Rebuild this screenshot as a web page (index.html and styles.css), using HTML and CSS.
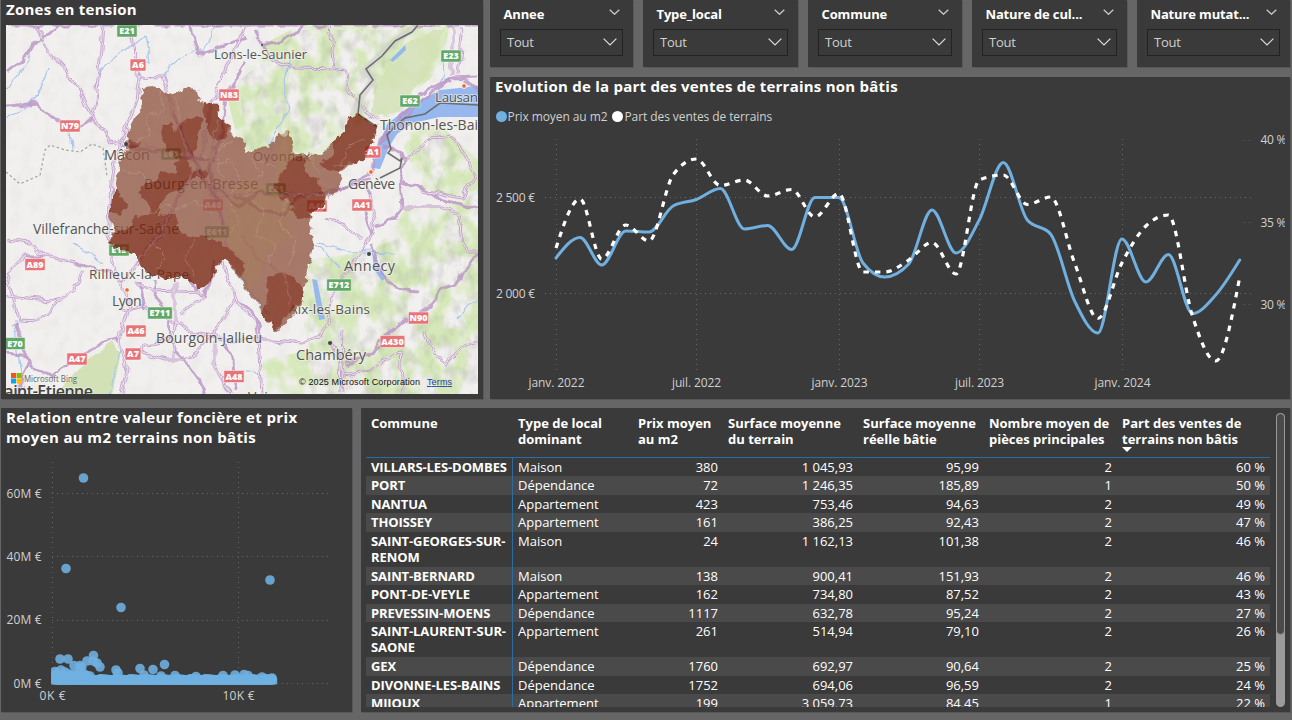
FILE: index.html
```html
<!DOCTYPE html>
<html lang="fr">
<head>
<meta charset="utf-8">
<title>Zones en tension</title>
<link rel="stylesheet" href="styles.css">
</head>
<body>
<main class="report">
  <section class="panel map-panel">
    <h2 class="title">Zones en tension</h2>
    <svg class="map" viewBox="6 25 472 369" width="472" height="369">
      <defs>
        <filter id="rough" x="-5%" y="-5%" width="110%" height="110%">
          <feTurbulence type="fractalNoise" baseFrequency="0.13" numOctaves="2" seed="4" result="n"/>
          <feDisplacementMap in="SourceGraphic" in2="n" scale="9" xChannelSelector="R" yChannelSelector="G"/>
        </filter>
        <filter id="wobble" x="-5%" y="-5%" width="110%" height="110%">
          <feTurbulence type="fractalNoise" baseFrequency="0.07" numOctaves="2" seed="9" result="n"/>
          <feDisplacementMap in="SourceGraphic" in2="n" scale="10" xChannelSelector="R" yChannelSelector="G"/>
        </filter>
        <filter id="forest" x="0" y="0" width="100%" height="100%" color-interpolation-filters="sRGB">
          <feTurbulence type="fractalNoise" baseFrequency="0.045 0.035" numOctaves="3" seed="12"/>
          <feColorMatrix values="0 0 0 0 .84  0 0 0 0 .91  0 0 0 0 .73  0 4.500 0 0 -1.700"/>
          <feComposite in2="SourceGraphic" operator="in"/>
        </filter>
        <filter id="relief" x="0" y="0" width="100%" height="100%" color-interpolation-filters="sRGB">
          <feTurbulence type="fractalNoise" baseFrequency="0.09 0.06" numOctaves="3" seed="3"/>
          <feColorMatrix values="0 0 0 0 .5  0 0 0 0 .5  0 0 0 0 .5  0 3 0 0 -1.3"/>
          <feComposite in2="SourceGraphic" operator="in"/>
        </filter>
        <clipPath id="frame"><rect x="6" y="25" width="472" height="369"/></clipPath>
      </defs>
      <rect x="6" y="25" width="472" height="369" fill="#f1f0ee"/>
      <rect x="6" y="25" width="472" height="369" opacity=".04" filter="url(#relief)"/>
      <g filter="url(#forest)">
        <path d="M228 100L262 45L300 25H450L440 70L400 105L360 125L322 155L240 150ZM322 394L300 310L310 260L375 250L405 210L478 200V394ZM400 135L440 125L478 160V205L420 190ZM265 394L262 360L310 350L340 394Z" fill="#000"/>
      </g>
      <path d="M375 85L410 40L445 28L430 70L400 112L370 118Z" fill="#d3e2b6" opacity=".8" filter="url(#wobble)"/>
      <path d="M56 394L82 365L112 342L122 355L112 394Z" fill="#d3e2b6" filter="url(#wobble)"/>
      <g filter="url(#relief)" opacity=".16">
        <path d="M310 270L395 240L478 190V394H305ZM240 80L300 30H410L360 120L300 155H245ZM405 140L440 130L470 170L440 195Z"/>
      </g>
      <!-- lakes and rivers -->
      <g fill="#96b8ef">
        <path d="M373 168L376 152L387 124L413 104L440 90L478 86V117L440 117L413 123L397 134L389 147L380 169Z"/>
        <path d="M312 279L317 280L325 319L319 320Z"/>
        <path d="M372 251L378 263L386 278L382 281L374 269Z"/>
        <path d="M390 60L405 45L406 50L393 62Z"/>
      </g>
      <g fill="none" stroke="#a9c7ee" stroke-width="1.2" filter="url(#wobble)">
        <path d="M290 58L284 80L288 110L270 145M95 75L120 55L145 35M145 35L150 62L137 58M162 74L185 55L205 50L215 25M50 68L36 98L6 120M6 90L30 55M70 132L72 148M72 245L103 262M318 244L345 252L375 251M395 254L360 253M313 246L322 250L340 268M110 394L115 370L123 350M14 318L18 360L24 394M235 270L270 315M478 300L455 320M443 48L445 75L440 83M238 370L262 375"/>
      </g>
      <!-- roads: lilac casing with a paler core -->
      <g fill="none" stroke-linejoin="round" filter="url(#wobble)">
        <g stroke="#b992c4" stroke-opacity=".8" stroke-width="2.9">
          <path d="M132 25L134 60L140 78L137 100L126 130L118 146L112 180L110 225L108 246L118 275L130 305L124 325L120 340L128 370L122 394"/>
          <path d="M60 25L48 36L35 41L28 54L6 72M38 25L45 45L60 65L80 90L92 115M103 25L99 70L96 100L92 118L116 145M6 106L36 103L55 120L78 126L92 118M140 75L162 76L175 112L190 152L205 180L216 198L225 225"/>
          <path d="M247 25L238 45L222 78L213 100L205 140L195 170L178 198L160 235L138 262L122 285M216 25L225 22M190 25L198 55L225 46L247 38M246 60L225 95L222 130L212 165"/>
          <path d="M118 146L150 151L185 157L210 162L212 187L240 205L262 192L300 195L340 190L370 175L376 160L380 140L400 115L425 92L450 78L478 77M300 195L285 215L262 210L235 195"/>
          <path d="M6 240L30 243L45 256L75 262L98 270L118 275M83 270L72 290L60 300L40 322L18 321M18 321L14 300L6 272L25 256L45 256M6 296L50 300L63 296"/>
          <path d="M6 353L22 355L35 368L53 378L62 367L85 352L108 340L120 338M15 395L28 360L14 322"/>
          <path d="M122 310L145 305L160 315L195 332L225 340L275 340L303 343L322 332L328 320L332 296L345 275L360 255L370 235L376 220L370 195L362 182"/>
          <path d="M135 282L155 292L200 290L205 298L180 315M154 280L155 292L165 318L175 350L185 360L165 360L143 353L145 345L175 340M185 360L200 380L205 394M140 282L145 310M175 283L175 315L174 358M235 300L222 322L200 350L185 360M215 262L205 298L188 278M223 262L238 305L255 320L258 340L262 394M235 300L258 320L262 340"/>
          <path d="M215 340L215 365L225 385L232 394M225 345L233 355L234 390"/>
          <path d="M330 340L342 362L345 394M345 362L370 355L385 335L405 320L420 315L440 290L455 285L478 252M345 375L370 370L400 350L403 394M346 366L388 345M425 330L432 350L446 365L460 350L478 342M420 292L395 290L380 270L372 245"/>
          <path d="M376 227L395 217L402 208L400 180L405 160L397 150L384 147M402 208L440 208L460 215L462 235L468 252L478 252M402 182L420 187L440 200L460 205L478 210M405 160L425 140L440 135L455 140L475 175L462 198L420 190"/>
          <path d="M452 25L452 75M463 28L458 75M478 90L465 80M380 145L395 125L435 90L450 80M376 120L360 106L350 90L345 70L335 68L330 25M335 69L295 68L270 60L262 45L256 30M262 45L290 38L305 25M6 25L480 25"/>
          <path d="M325 220L345 225L362 240M370 235L365 210M328 198L345 187L370 180M340 394L342 330"/>
        </g>
        <g stroke="#eee0f1" stroke-width="1.1">
          <path d="M132 25L134 60L140 78L137 100L126 130L118 146L112 180L110 225L108 246L118 275L130 305L124 325L120 340L128 370L122 394M247 25L238 45L222 78L213 100L205 140L195 170L178 198L160 235L138 262L122 285M38 25L45 45L60 65L80 90L92 115M103 25L99 70L96 100L92 118L116 145M6 296L50 300L63 296M122 310L145 305L160 315L195 332L225 340L275 340L303 343L322 332L328 320L332 296L345 275L360 255L370 235L376 220L370 195M402 208L440 208L460 215L462 235L468 252L478 252M452 25L452 75M463 28L458 75M330 340L342 362L345 394M405 160L425 140L440 135L455 140L475 175L462 198L420 190M335 69L295 68L270 60M235 300L222 322L200 350L185 360M376 120L360 106L350 90L345 70L335 68L330 25M345 375L370 370L400 350L403 394M425 330L432 350L446 365L460 350L478 342M140 75L162 76L175 112M6 240L30 243L45 256L75 262M83 270L72 290L60 300L40 322L18 321L14 300L6 272L25 256M175 283L175 315L174 358M135 282L155 292L200 290L205 298L180 315M185 360L165 360L143 353L145 345L175 340M258 340L262 394M223 262L238 305L255 320M215 340L215 365L225 385L232 394M325 220L345 225L362 240M340 394L342 330"/>
        </g>
      </g>
      <!-- national border -->
      <path d="M418 25L395 41L366 69L373 80L358 102L358 114" fill="none" stroke="#cfcfcf" stroke-width="7" opacity=".6"/>
      <path d="M418 25L412 32L395 41L382 56L366 69L373 80L360 95L358 114L377 127M478 105L440 103L425 114L405 118L395 126L387 135L391 149L388 153L400 161L402 158L400 168L380 178" fill="none" stroke="#6d6d6d" stroke-width="1.6"/>
      <path d="M6 172L20 184L40 175L45 150L50 145L65 150L80 152L92 144L103 148L107 176" fill="none" stroke="#999" stroke-width="1.1" stroke-dasharray="2.500 2.500"/>
      <!-- city labels -->
      <g class="city" clip-path="url(#frame)">
        <text x="214" y="59" font-size="13" textLength="93">Lons-le-Saunier</text>
        <text x="435" y="102" font-size="13.500" textLength="43">Lausan</text>
        <text x="380" y="130" font-size="14" textLength="98">Thonon-les-Bai</text>
        <text x="104" y="160" font-size="14.500" textLength="46">Mâcon</text>
        <text x="253" y="161" font-size="13" textLength="57">Oyonnax</text>
        <text x="144" y="188.500" font-size="14" textLength="114">Bourg-en-Bresse</text>
        <text x="348" y="188.500" font-size="14" textLength="47">Genève</text>
        <text x="33" y="233.500" font-size="14" textLength="146">Villefranche-sur-Saône</text>
        <text x="89" y="279" font-size="13.500" textLength="100">Rillieux-la-Pape</text>
        <text x="112" y="305.500" font-size="14" textLength="29.500">Lyon</text>
        <text x="344" y="271" font-size="14.500" textLength="51">Annecy</text>
        <text x="289" y="314" font-size="13.500" textLength="81">Aix-les-Bains</text>
        <text x="156" y="343" font-size="14" textLength="106">Bourgoin-Jallieu</text>
        <text x="296" y="360" font-size="14.500" textLength="70">Chambéry</text>
        <text x="248" y="402" font-size="14" textLength="42">Voiron</text>
      </g>
      <text class="city strong" x="-4" y="396.500" font-size="16" textLength="97">Saint-Etienne</text>
      <g id="shields"></g>
      <!-- communes of the department -->
      <g opacity=".78" filter="url(#rough)">
        <path fill="#925844" d="M143 88L152 87L160 89L167 95L177 92L190 87L197 90L200 102L208 106L217 107L218 117L228 125L233 135L246 141L245 153L265 147L275 143L276 132L283 136L290 132L293 143L292 154L322 155L332 142L345 130L348 120L358 114L377 127L373 143L365 152L368 159L353 163L339 172L343 180L337 192L327 195L323 208L310 212L312 233L313 250L307 270L305 288L302 303L295 312L287 323L275 332L270 323L262 313L260 307L247 290L238 277L227 260L222 260L215 270L212 282L200 288L187 278L167 278L150 275L143 268L137 257L128 252L108 243L115 232L110 220L112 200L118 190L117 182L120 163L127 148L128 133L137 115L142 100Z"/>
        <path fill="#8f5f30" opacity=".5" d="M276 132L290 132L293 154L322 156L303 172L310 180L300 214L285 216L292 235L268 250L262 272L250 290L230 255L226 220L232 190L250 180L276 190Z"/>
        <g fill="#77200a">
          <path d="M203 104L217 106L218 117L228 126L226 137L217 142L208 130L205 118Z"/>
          <path d="M162 126L170 124L175 132L183 122L196 117L203 117L199 130L197 145L192 155L188 160L193 172L203 168L210 171L206 178L190 178L183 187L172 192L166 198L155 208L145 200L138 192L145 182L156 180L160 172L175 175L178 158L166 150L163 138Z"/>
          <path d="M128 140L140 142L139 148L130 148Z"/>
          <path d="M112 195L119 190L124 200L127 208L121 214L111 212Z"/>
          <path d="M108 243L118 231L130 227L136 216L150 215L152 198L160 204L159 215L175 213L180 232L195 237L210 238L222 242L222 247L235 253L246 265L241 277L227 260L222 260L215 270L212 282L200 288L187 278L167 278L150 275L143 268L137 257L128 252Z"/>
          <path d="M332 142L345 130L348 120L358 114L377 127L373 143L365 152L368 159L353 163L332 166Z"/>
          <path d="M293 157L306 157L303 172L317 180L325 197L323 208L310 213L309 218L295 219L292 205L280 197L275 185L282 175Z"/>
          <path d="M320 163L332 155L334 166L345 165L338 172L326 170Z"/>
          <path d="M267 277L282 272L295 278L305 290L302 303L290 312L275 332L262 313L268 300Z"/>
        </g>
        <path fill="none" stroke="#b98976" stroke-width=".7" opacity=".7" d="M160 90L163 110L145 118L150 135L135 140M175 95L180 118M200 150L215 165L230 160L240 180L228 200L240 220L225 240M150 215L165 205L180 210L195 200L212 215M250 155L262 175L245 195L265 210L255 235L275 245L268 265M285 200L280 225L295 240L290 265M120 170L140 172L150 185M310 155L320 175M195 240L185 260L195 275M150 240L165 255L158 270M225 180L212 150L235 140M275 165L258 160M340 165L350 145L365 140"/>
        <path fill="none" stroke="#8c4943" stroke-width="1.800" opacity=".7" d="M167 95L185 145L200 175L216 198L228 250M128 140L165 151L208 160L216 198L262 192L300 195L328 195M208 160L218 120M195 170L178 198L160 235L138 262M240 235L260 260L285 275L290 305"/>
      </g>
      <g fill="#444"><circle cx="126" cy="144" r="2"/><circle cx="369" cy="254" r="2"/><circle cx="330" cy="343" r="2"/><circle cx="262" cy="45" r="1"/><circle cx="200" cy="171" r="2" opacity=".5"/></g>
      <g fill="#f2672d" stroke="#fff" stroke-width="1"><circle cx="127" cy="290" r="2.400"/><circle cx="371" cy="172" r="2.400"/><circle cx="464" cy="86" r="2.400"/></g>
      <g><path fill="#f35325" d="M11 373h5v5h-5z"/><path fill="#81bc06" d="M16.500 373h5v5h-5z"/><path fill="#05a6f0" d="M11 378.500h5v5h-5z"/><path fill="#ffba08" d="M16.500 378.500h5v5h-5z"/></g>
      <text class="bing" x="24" y="382" textLength="53" lengthAdjust="spacingAndGlyphs">Microsoft Bing</text>
      <text class="legal" x="299" y="385" textLength="121">© 2025 Microsoft Corporation</text>
      <text class="legal terms" x="427" y="385" textLength="25">Terms</text>
    </svg>
  </section>

  <div class="right-top">
    <div class="slicers">
      <section class="panel slicer"><header><b>Annee</b><svg class="chev sm" viewBox="0 0 11 6"><path d="M.7.7l4.800 4.600L10.300.7"/></svg></header><div class="drop">Tout<svg class="chev" viewBox="0 0 14 8"><path d="M.6.6L7 7L13.400.6"/></svg></div></section>
      <section class="panel slicer"><header><b>Type_local</b><svg class="chev sm" viewBox="0 0 11 6"><path d="M.7.7l4.800 4.600L10.300.7"/></svg></header><div class="drop">Tout<svg class="chev" viewBox="0 0 14 8"><path d="M.6.6L7 7L13.400.6"/></svg></div></section>
      <section class="panel slicer"><header><b>Commune</b><svg class="chev sm" viewBox="0 0 11 6"><path d="M.7.7l4.800 4.600L10.300.7"/></svg></header><div class="drop">Tout<svg class="chev" viewBox="0 0 14 8"><path d="M.6.6L7 7L13.400.6"/></svg></div></section>
      <section class="panel slicer"><header><b>Nature de cul...</b><svg class="chev sm" viewBox="0 0 11 6"><path d="M.7.7l4.800 4.600L10.300.7"/></svg></header><div class="drop">Tout<svg class="chev" viewBox="0 0 14 8"><path d="M.6.6L7 7L13.400.6"/></svg></div></section>
      <section class="panel slicer"><header><b>Nature mutat...</b><svg class="chev sm" viewBox="0 0 11 6"><path d="M.7.7l4.800 4.600L10.300.7"/></svg></header><div class="drop">Tout<svg class="chev" viewBox="0 0 14 8"><path d="M.6.6L7 7L13.400.6"/></svg></div></section>
    </div>
    <section class="panel line-panel">
      <h2 class="title">Evolution de la part des ventes de terrains non bâtis</h2>
      <div class="legend"><i class="dot blue"></i><span>Prix moyen au m2</span><i class="dot white"></i><span>Part des ventes de terrains</span></div>
      <svg class="chart" viewBox="490 130 795 268" width="795" height="268">
        <g class="grid">
          <path d="M545 197.500H1251M545 293.500H1251M556.500 139V372M696.500 139V372M839.500 139V372M979.500 139V372M1122.500 139V372M1244 140.500H1251M1244 222.500H1251M1244 304.500H1251"/>
        </g>
        <path id="price" class="price"/>
        <path id="share" class="share"/>
        <g class="axis">
          <text x="496" y="202" textLength="39">2 500 €</text><text x="496" y="298" textLength="39">2 000 €</text>
          <text x="1260.500" y="144" textLength="26">40 %</text><text x="1260.500" y="226.500" textLength="26">35 %</text><text x="1260.500" y="308.500" textLength="26">30 %</text>
          <text x="528.500" y="387" textLength="56">janv. 2022</text><text x="672" y="387" textLength="49">juil. 2022</text><text x="811.500" y="387" textLength="56">janv. 2023</text><text x="955" y="387" textLength="49">juil. 2023</text><text x="1094.500" y="387" textLength="56">janv. 2024</text>
        </g>
      </svg>
    </section>
  </div>

  <div class="bottom">
    <section class="panel scatter-panel">
      <h2 class="title">Relation entre valeur foncière et prix<br>moyen au m2 terrains non bâtis</h2>
      <svg class="scatter" viewBox="1 450 350 262" width="350" height="262">
        <g class="grid"><path d="M52 493.500H330M52 556.500H330M52 620.500H330M52 683.500H330M52.500 462V684M238.500 462V684"/></g>
        <clipPath id="plot"><rect x="51" y="455" width="290" height="229.600"/></clipPath>
        <g id="dots" clip-path="url(#plot)"></g>
        <g class="axis">
          <text x="6.500" y="498" textLength="35">60M €</text><text x="6.500" y="561" textLength="35">40M €</text><text x="6.500" y="624" textLength="35">20M €</text><text x="13.500" y="688" textLength="28">0M €</text>
          <text x="39.500" y="700" textLength="26">0K €</text><text x="222.500" y="700" textLength="32">10K €</text>
        </g>
      </svg>
    </section>
    <section class="panel table-panel">
      <div class="viewport">
        <div class="row head"><span>Commune</span><span>Type de local<br>dominant</span><span>Prix moyen<br>au m2</span><span>Surface moyenne<br>du terrain</span><span>Surface moyenne<br>réelle bâtie</span><span>Nombre moyen de<br>pièces principales</span><span>Part des ventes de<br>terrains non bâtis<svg class="sort" viewBox="0 0 10 5"><path d="M0 0H10L5 5Z"/></svg></span></div>
        <div class="row"><b>VILLARS-LES-DOMBES</b><span>Maison</span><span>380</span><span>1 045,93</span><span>95,99</span><span>2</span><span>60 %</span></div>
        <div class="row"><b>PORT</b><span>Dépendance</span><span>72</span><span>1 246,35</span><span>185,89</span><span>1</span><span>50 %</span></div>
        <div class="row"><b>NANTUA</b><span>Appartement</span><span>423</span><span>753,46</span><span>94,63</span><span>2</span><span>49 %</span></div>
        <div class="row"><b>THOISSEY</b><span>Appartement</span><span>161</span><span>386,25</span><span>92,43</span><span>2</span><span>47 %</span></div>
        <div class="row tall"><b>SAINT-GEORGES-SUR-<br>RENOM</b><span>Maison</span><span>24</span><span>1 162,13</span><span>101,38</span><span>2</span><span>46 %</span></div>
        <div class="row"><b>SAINT-BERNARD</b><span>Maison</span><span>138</span><span>900,41</span><span>151,93</span><span>2</span><span>46 %</span></div>
        <div class="row"><b>PONT-DE-VEYLE</b><span>Appartement</span><span>162</span><span>734,80</span><span>87,52</span><span>2</span><span>43 %</span></div>
        <div class="row"><b>PREVESSIN-MOENS</b><span>Dépendance</span><span>1117</span><span>632,78</span><span>95,24</span><span>2</span><span>27 %</span></div>
        <div class="row tall"><b>SAINT-LAURENT-SUR-<br>SAONE</b><span>Appartement</span><span>261</span><span>514,94</span><span>79,10</span><span>2</span><span>26 %</span></div>
        <div class="row"><b>GEX</b><span>Dépendance</span><span>1760</span><span>692,97</span><span>90,64</span><span>2</span><span>25 %</span></div>
        <div class="row"><b>DIVONNE-LES-BAINS</b><span>Dépendance</span><span>1752</span><span>694,06</span><span>96,59</span><span>2</span><span>24 %</span></div>
        <div class="row"><b>MIJOUX</b><span>Appartement</span><span>199</span><span>3 059,73</span><span>84,45</span><span>1</span><span>22 %</span></div>
      </div>
      <div class="scroll"><div class="thumb"></div></div>
    </section>
  </div>
</main>
<script src="script.js"></script>
</body>
</html>
```

FILE: styles.css
```css
* { box-sizing: border-box; }
body { margin: 0; background: #666; font-family: "Open Sans", "Noto Sans", sans-serif; color: #fff; }
.report { width: 1292px; height: 720px; overflow: hidden; display: grid; grid-template-columns: 482px 800px; grid-template-rows: 399px 304px; column-gap: 7px; row-gap: 9px; padding-left: 1px; }
.panel { background: #3a3a3a; box-shadow: 1px 1px 0 #585858; overflow: hidden; }
.title { margin: 0; font-size: 15px; line-height: 18px; font-weight: 700; letter-spacing: .24px; padding-left: 5px; white-space: nowrap; }
.map-panel .title { height: 25px; }
.map { display: block; margin-left: 5px; }
.city text, text.city { fill: #555; stroke: #f4f3ef; stroke-opacity: .6; stroke-width: 2px; paint-order: stroke; }
text.strong { fill: #444; font-weight: 600; }
.shield text { fill: #fff; font-size: 9px; font-weight: 800; text-anchor: middle; }
.bing { font-size: 9px; fill: #666; }
.legal { font-family: "Liberation Sans", sans-serif; font-size: 9px; fill: #111; }
.terms { fill: #1a3fa8; text-decoration: underline; }

.right-top { display: flex; flex-direction: column; gap: 10px; }
.slicers { display: grid; grid-template-columns: 143px 155px 154px 155px 153px; gap: 10px; height: 67px; }
.slicer { padding: 0 10px; }
.slicer header { height: 28.5px; padding: 4px 3.5px 0; display: flex; justify-content: space-between; font-size: 13px; line-height: 20px; letter-spacing: -.15px; white-space: nowrap; }
.chev { width: 14px; height: 8px; fill: none; stroke: #ddd; stroke-width: 1.2; }
.chev.sm { width: 11px; height: 6px; margin-top: 4.5px; stroke: #ccc; }
.drop { height: 27px; border: 1px solid #222; padding: 0 5px 1px 6px; display: flex; align-items: center; justify-content: space-between; color: #d0d0d0; font-size: 13px; letter-spacing: -.2px; }
.line-panel { height: 322px; }
.line-panel .title { padding-left: 5px; height: 31px; }
.legend { height: 17px; padding: 0 0 1px 5.5px; display: flex; align-items: center; font-size: 12px; letter-spacing: -.08px; color: #d0d0d0; white-space: nowrap; }
.dot { width: 11px; height: 11px; border-radius: 50%; margin-right: 1px; flex: none; }
.dot.blue { background: #70b0e0; }
.dot.white { background: #fff; margin-left: 5px; }
.chart { display: block; margin-top: 5px; }
.grid path { fill: none; stroke: #646464; stroke-width: 1; stroke-dasharray: 1 4; }
.axis text { font-size: 12px; fill: #d0d0d0; }
.price { fill: none; stroke: #70b0e0; stroke-width: 3; stroke-linecap: round; }
.share { fill: none; stroke: #fff; stroke-width: 3.2; stroke-dasharray: 5.5 6; }

.bottom { grid-column: 1 / 3; display: grid; grid-template-columns: 350.5px 929px; column-gap: 9.5px; }
.scatter-panel .title { height: 42px; line-height: 20px; position: relative; top: -1px; letter-spacing: .37px; }
.scatter { display: block; }
#dots { fill: #70b0e0; fill-opacity: .88; }

.table-panel { display: flex; padding-left: 5px; }
.viewport { width: 904px; height: 299px; overflow: hidden; }
.row { display: grid; grid-template-columns: 147px 120px 90px 135px 126px 133px 153px; height: 18.5px; font-size: 13px; line-height: 16px; letter-spacing: 0; }
.row b { letter-spacing: -.1px; }
.row.tall { height: 35px; }
.row > * { padding: 1px 5px 0; text-align: right; white-space: nowrap; }
.row > :nth-child(-n+2) { text-align: left; }
.row > :first-child { border-right: 1px solid #2b6ca3; }
.row:nth-child(odd):not(.head) { background: #4a4a4a; }
.head { height: 49.5px; font-weight: 700; border-bottom: 1px solid #2b6ca3; }
.row.head { height: 49.5px; }
.row.head > * { text-align: left; padding-top: 6.5px; border: 0; letter-spacing: 0; }
.sort { display: block; width: 10px; height: 5px; fill: #fff; }
.scroll { width: 9px; height: 294px; margin: 5px 0 0 6px; background: #9b9b9b; border-radius: 5px; }
.thumb { height: 222px; background: #4a4a4a; border: 1px solid #999; border-radius: 5px; }
```

FILE: script.js
```js
const NS = 'http://www.w3.org/2000/svg';
const make = (tag, attrs, parent) => {
  const el = document.createElementNS(NS, tag);
  for (const k in attrs) el.setAttribute(k, attrs[k]);
  parent.appendChild(el);
  return el;
};

// Monotone cubic interpolation through monthly points.
function monotone(xs, ys) {
  const n = xs.length, s = [], m = [];
  for (let i = 0; i < n - 1; i++) s.push((ys[i + 1] - ys[i]) / (xs[i + 1] - xs[i]));
  for (let i = 1; i < n - 1; i++) {
    const h0 = xs[i] - xs[i - 1], h1 = xs[i + 1] - xs[i];
    const p = (s[i - 1] * h1 + s[i] * h0) / (h0 + h1);
    m[i] = (Math.sign(s[i - 1]) + Math.sign(s[i])) * Math.min(Math.abs(s[i - 1]), Math.abs(s[i]), Math.abs(p) / 2) || 0;
  }
  m[0] = (3 * s[0] - m[1]) / 2;
  m[n - 1] = (3 * s[n - 2] - m[n - 2]) / 2;
  let d = `M${xs[0]} ${ys[0]}`;
  for (let i = 0; i < n - 1; i++) {
    const h = (xs[i + 1] - xs[i]) / 3;
    d += `C${xs[i] + h} ${ys[i] + h * m[i]} ${xs[i + 1] - h} ${ys[i + 1] - h * m[i + 1]} ${xs[i + 1]} ${ys[i + 1]}`;
  }
  return d;
}
const start = Date.UTC(2022, 0, 1);
const months = Array.from({ length: 30 }, (_, i) => 556 + (Date.UTC(2022, i, 1) - start) / 864e5 * 0.7752);
const price = [258, 237.5, 265, 231, 232, 206, 199.5, 188.5, 229, 225.5, 249.5, 197.5, 197.5, 263, 277, 264, 210, 253, 220, 162.5, 220, 234, 301, 333, 239, 282, 254.5, 313.5, 295, 260];
const share = [248, 199, 259, 225, 241, 175, 159, 185.5, 180, 196, 189.5, 217, 193.5, 272, 272, 260, 242.5, 274, 180, 175, 204.5, 197, 263, 318.5, 263, 226, 215, 316, 361, 277];
document.getElementById('price').setAttribute('d', monotone(months, price));
document.getElementById('share').setAttribute('d', monotone(months, share));

// Sales: isolated points, then the dense band along the axis.
const dots = document.getElementById('dots');
const points = [[83.5, 478], [66, 568.5], [121, 607.5], [270, 580], [60, 659], [68, 659], [93.5, 655.5], [74, 665.5], [80, 665.5], [87, 661], [93, 661], [97, 663], [100, 667], [116, 670], [140, 668.5], [153, 669.5], [164.5, 664.5], [82, 667], [80, 668], [55, 671.5], [61, 670], [118, 673], [223, 675.5], [235, 675], [244, 674.5], [196, 676.5], [175, 675.5], [161, 676], [144, 675], [90, 676], [248, 675.5], [262, 677], [272, 678], [65, 672], [57, 673], [70, 674], [76, 674], [84, 674]];
for (let x = 55; x < 273; x += 1.5) points.push([x, 678.8 + (x * 7 % 5) * .25], [x, 682]);
for (let x = 55; x < 88; x += 2) points.push([x, 675.5]);
points.forEach(([cx, cy]) => make('circle', { cx, cy, r: 4.8 }, dots));

// Road number shields: centre, label, colour.
const shields = document.getElementById('shields');
const red = '#e87378', green = '#62a866';
[[127, 31, 'E21', green], [138, 65, 'A6', red], [229, 95, 'N83', red], [70, 126, 'N79', red], [451, 56, 'E23', green], [410, 101, 'E62', green], [373, 152, 'A1', red], [362, 205, 'A41', red], [35, 264.5, 'A89', red], [119, 250, 'E15', green], [160, 313, 'E711', green], [136, 331, 'A46', red], [133, 354, 'A7', red], [77, 359, 'A47', red], [15, 343.5, 'E70', green], [234, 376.5, 'A48', red], [339, 285, 'E712', green], [418.5, 318, 'N90', red], [392.5, 341.5, 'A430', red], [171, 154, 'E62', green], [276, 189, 'E21', green], [213, 205, 'A40', red], [217, 232, 'E611', green], [317, 206, 'A40', red]].forEach(([x, y, label, fill]) => {
  const w = label.length * 4.4 + 7;
  const g = make('g', { class: 'shield' }, shields);
  make('rect', { x: x - w / 2, y: y - 6, width: w, height: 12, rx: 1, fill, stroke: '#fff', 'stroke-opacity': .6, 'stroke-width': .8 }, g);
  make('text', { x, y: y + 3.3 }, g).textContent = label;
});
```
